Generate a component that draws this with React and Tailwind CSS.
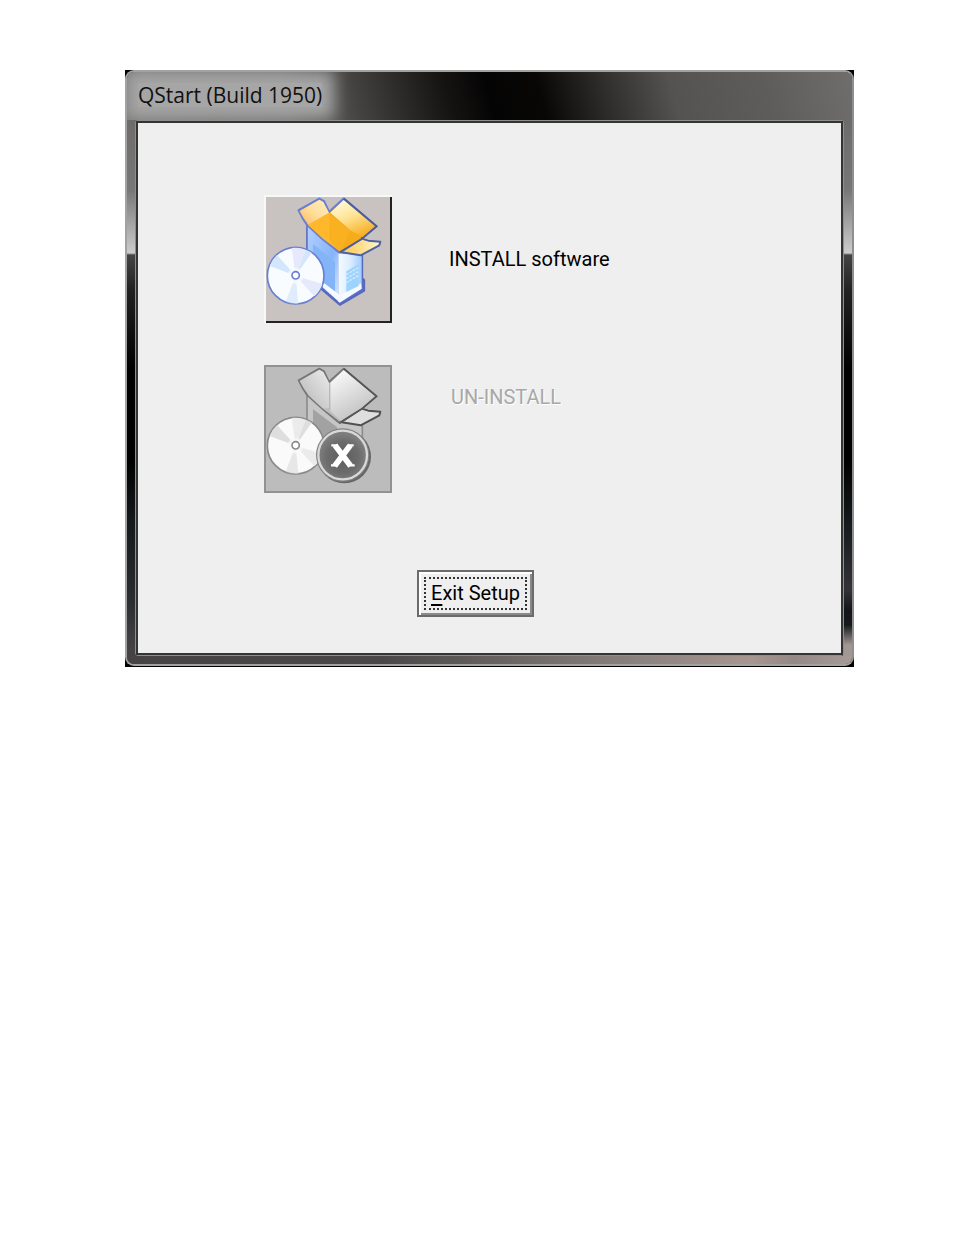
function Disc({ edge, a, b, c }) {
  return (
    <g>
      <circle cx="122" cy="269" r="85" fill={a} stroke={edge} strokeWidth="5" />
      <path d="M122 269 L44 240 A84 84 0 0 1 66 207 Z" fill={b} />
      <path d="M122 269 L110 186 A84 84 0 0 1 152 191 Z" fill={c} />
      <path d="M122 269 L152 191 A84 84 0 0 1 170 200 Z" fill={b} />
      <path d="M122 269 L202 294 A84 84 0 0 1 178 331 Z" fill={c} />
      <path d="M122 269 L130 353 A84 84 0 0 1 92 347 Z" fill={b} opacity="0.7" />
      <circle cx="122" cy="269" r="24" fill={a} opacity="0.7" />
      <circle cx="122" cy="268" r="11" fill="#fff" stroke={edge} strokeWidth="5" />
    </g>
  );
}

function InstallIcon() {
  return (
    <svg viewBox="27 27 384 384" className="block size-full" aria-hidden="true">
      <defs>
        <linearGradient id="in-left" x1="0" y1="0" x2="1" y2="1">
          <stop offset="0" stopColor="#b4d0ff" />
          <stop offset="0.6" stopColor="#86b4fa" />
          <stop offset="1" stopColor="#d8ecff" />
        </linearGradient>
        <linearGradient id="in-right" x1="0" y1="0" x2="1" y2="0">
          <stop offset="0" stopColor="#f4faff" />
          <stop offset="0.5" stopColor="#dceeff" />
          <stop offset="1" stopColor="#a5ccff" />
        </linearGradient>
        <linearGradient id="in-flap1" x1="0" y1="1" x2="1" y2="0">
          <stop offset="0" stopColor="#ffb95e" />
          <stop offset="0.5" stopColor="#ffdf9c" />
          <stop offset="1" stopColor="#ffeec2" />
        </linearGradient>
        <linearGradient id="in-flap2" x1="0.2" y1="0" x2="0.7" y2="1">
          <stop offset="0" stopColor="#fffbdc" />
          <stop offset="0.45" stopColor="#ffe495" />
          <stop offset="1" stopColor="#f8ab1c" />
        </linearGradient>
        <linearGradient id="in-flap3" x1="0" y1="0" x2="1" y2="0">
          <stop offset="0" stopColor="#ffc64f" />
          <stop offset="1" stopColor="#fff7c8" />
        </linearGradient>
      </defs>
      <path d="M156 112 L250 198 L322 202 L322 276 L328 282 V314 L255 357 L200 310 L156 240 Z" fill="#5a6fc4" stroke="#5468bd" strokeWidth="5" strokeLinejoin="round" />
      <path d="M158 116 L250 202 V346 L204 306 L158 240 Z" fill="url(#in-left)" />
      <path d="M174 174 L240 228 V318 L204 290 L174 230 Z" fill="#84b4f8" />
      <path d="M250 202 L320 206 V308 L254 350 L250 346 Z" fill="url(#in-right)" />
      <path d="M202 302 L254 348 L320 308 L318 292 L255 328 L206 290 Z" fill="#f7fbff" />
      <path d="M274 256 L311 234 V300 L274 318 Z" fill="#9dd3ff" />
      <path d="M274 266 L311 244 M274 278 L311 256 M274 290 L311 268" stroke="#d2ecff" strokeWidth="4" strokeDasharray="8 3" />
      <path d="M320 158 L340 164 L376 167 L373 178 L317 208 L260 199" fill="url(#in-flap3)" stroke="#4f60a5" strokeWidth="6" strokeLinejoin="round" />
      <path d="M131 73 L193 38 L207 46 L222 78 L266 38 L364 121 L320 158 L254 199 L204 160 L156 116 L143 96 Z" fill="#f5a91c" stroke="#6a7fd2" strokeWidth="7" strokeLinejoin="round" />
      <path d="M266 38 L364 121 L320 158 L254 199" fill="none" stroke="#4c5d9a" strokeWidth="7" />
      <path d="M224 80 L254 196 L204 158 L158 116 L190 99 Z" fill="#ffb72c" />
      <path d="M224 82 L288 136 L318 157 L254 196 L224 160 Z" fill="#f6ab18" />
      <path d="M224 84 L228 168 L254 196 L286 134 Z" fill="#f9b021" />
      <path d="M134 75 L193 41 L205 48 L222 80 L160 116 L147 98 Z" fill="url(#in-flap1)" />
      <path d="M226 80 L266 42 L360 121 L322 154 L286 133 Z" fill="url(#in-flap2)" />
      <Disc edge="#6a7fd2" a="#f8fcff" b="#d3e6fc" c="#e6e8fb" />
    </svg>
  );
}

function UninstallIcon() {
  return (
    <svg viewBox="27 27 384 384" className="block size-full" aria-hidden="true">
      <defs>
        <linearGradient id="un-flap1" x1="0" y1="1" x2="1" y2="0">
          <stop offset="0" stopColor="#b4b4b4" />
          <stop offset="1" stopColor="#ececec" />
        </linearGradient>
        <linearGradient id="un-flap2" x1="0.2" y1="0" x2="0.7" y2="1">
          <stop offset="0" stopColor="#fafafa" />
          <stop offset="1" stopColor="#bcbcbc" />
        </linearGradient>
        <radialGradient id="un-badge" cx="0.5" cy="0.55" r="0.55">
          <stop offset="0" stopColor="#5c5c5c" />
          <stop offset="0.6" stopColor="#6c6c6c" />
          <stop offset="1" stopColor="#848484" />
        </radialGradient>
      </defs>
      <path d="M156 112 L250 198 L322 202 V300 L255 340 L200 310 L156 240 Z" fill="#c6c6c6" stroke="#8d8d8d" strokeWidth="5" />
      <path d="M174 160 L246 214 V300 L174 230 Z" fill="#a2a2a2" />
      <path d="M320 158 L340 164 L376 167 L373 178 L317 208 L260 199" fill="#dedede" stroke="#505050" strokeWidth="6" strokeLinejoin="round" />
      <path d="M131 73 L193 38 L207 46 L222 78 L266 38 L364 121 L320 158 L254 201 L204 160 L156 116 L143 96 Z" fill="#b0b0b0" stroke="#777" strokeWidth="6" strokeLinejoin="round" />
      <path d="M266 38 L364 121 L320 158 L254 201" fill="none" stroke="#555" strokeWidth="6" />
      <path d="M224 80 L254 196 L204 158 L158 116 Z" fill="#bebebe" />
      <path d="M224 82 L318 157 L254 196 L224 160 Z" fill="#adadad" />
      <path d="M134 75 L193 41 L205 48 L222 80 V156 L204 157 L160 116 L147 98 Z" fill="url(#un-flap1)" />
      <path d="M226 80 L266 42 L360 121 L322 154 L256 195 L226 164 Z" fill="url(#un-flap2)" />
      <Disc edge="#8a8a8a" a="#fafafa" b="#dedede" c="#ebebeb" />
      <circle cx="268" cy="302" r="80" fill="#666" />
      <circle cx="263" cy="297" r="80" fill="#828282" />
      <circle cx="263" cy="297" r="73" fill="url(#un-badge)" stroke="#d9d9d9" strokeWidth="7" />
      <path d="M240 268 L287 330 M286 268 L239 330" stroke="#fff" strokeWidth="17" />
      <path d="M229 268 H249 M279 268 H296 M228 328 H246 M280 328 H299" stroke="#fff" strokeWidth="7" />
    </svg>
  );
}

export default function App() {
  return (
    <main className="min-h-screen bg-white pt-[70px] pr-[100px] pl-[125px] font-['Roboto',sans-serif]">
      <section className="bg-black pb-px">
        <div className="overflow-hidden rounded-[9px] border-2 border-[#a2a2a1] border-r-[#8f8f8f] bg-[#4a4748]">
          <header className="flex h-[48px] items-center overflow-hidden bg-[linear-gradient(75deg,#777_0%,#6e6e6d_22%,#444241_32%,#161413_44%,#050404_50%,#080706_57%,#2c2a29_65%,#555352_75%,#5f5d5c_88%,#706e6d_100%)] pb-[2px] pl-[11px]">
            <h1 className="bg-[#a6a6a6] font-['Open_Sans',sans-serif] text-[21px] leading-6 text-[#111] shadow-[0_0_16px_12px_#a6a6a6]">QStart (Build 1950)</h1>
          </header>
          <div className="bg-[linear-gradient(to_bottom,#6e6c6b_0px,#777_70px,#ccc_133px,#444_135px,#222_170px,#000_250px,#000_340px,#15191b_400px,#333337_470px,#131519_490px,#17191d_505px,#a39794_525px),linear-gradient(to_bottom,#6e6c6b_0px,#777_70px,#ccc_133px,#444_135px,#222_170px,#000_250px,#000_340px,#15191b_400px,#2b2d30_480px,#464345_530px)] bg-[length:9px_100%,100%_100%] bg-right bg-no-repeat px-[8px]">
            <div className="rounded-[3px] border border-[#8d8f8c]">
              <div className="border-2 border-[#333533] bg-[#efefef] pt-[72px] pb-9 pl-[126px]">
                <div className="flex items-center gap-[57px]">
                  <button
                    id="install"
                    className="size-32 shrink-0 bg-[#c8c3c0] shadow-[inset_2px_2px_0_#f8f8f8,inset_-2px_-2px_0_#222]"
                  >
                    <InstallIcon />
                  </button>
                  <label htmlFor="install" className="text-xl leading-6 text-black">INSTALL software</label>
                </div>
                <div className="mt-[42px] flex items-start gap-[59px]">
                  <button
                    id="uninstall"
                    disabled
                    className="size-32 shrink-0 bg-[#bcbcbc] shadow-[inset_0_0_0_2px_#929292]"
                  >
                    <UninstallIcon />
                  </button>
                  <label htmlFor="uninstall" className="pt-5 text-xl leading-6 text-[#a8a8a8] [text-shadow:1px_1px_0_#fff]">UN-INSTALL</label>
                </div>
                <button className="mt-[77px] ml-[153px] block border-2 border-[#6b6b6b] bg-[#efefef] p-[5px] shadow-[inset_2px_2px_0_#fff,inset_-2px_-2px_0_#8a8a8a]">
                  <span className="block border-2 border-dotted border-[#333] px-[5px] py-[2px] text-xl leading-[25px] text-black">
                    <span className="underline decoration-2 underline-offset-4">E</span>xit Setup
                  </span>
                </button>
              </div>
            </div>
          </div>
          <div className="h-[8px] bg-[linear-gradient(to_right,#464345_0%,#4a4748_35%,#8a817e_70%,#a8958f_86%,#948986_92%,#a79b98_100%)]" />
        </div>
      </section>
    </main>
  );
}
